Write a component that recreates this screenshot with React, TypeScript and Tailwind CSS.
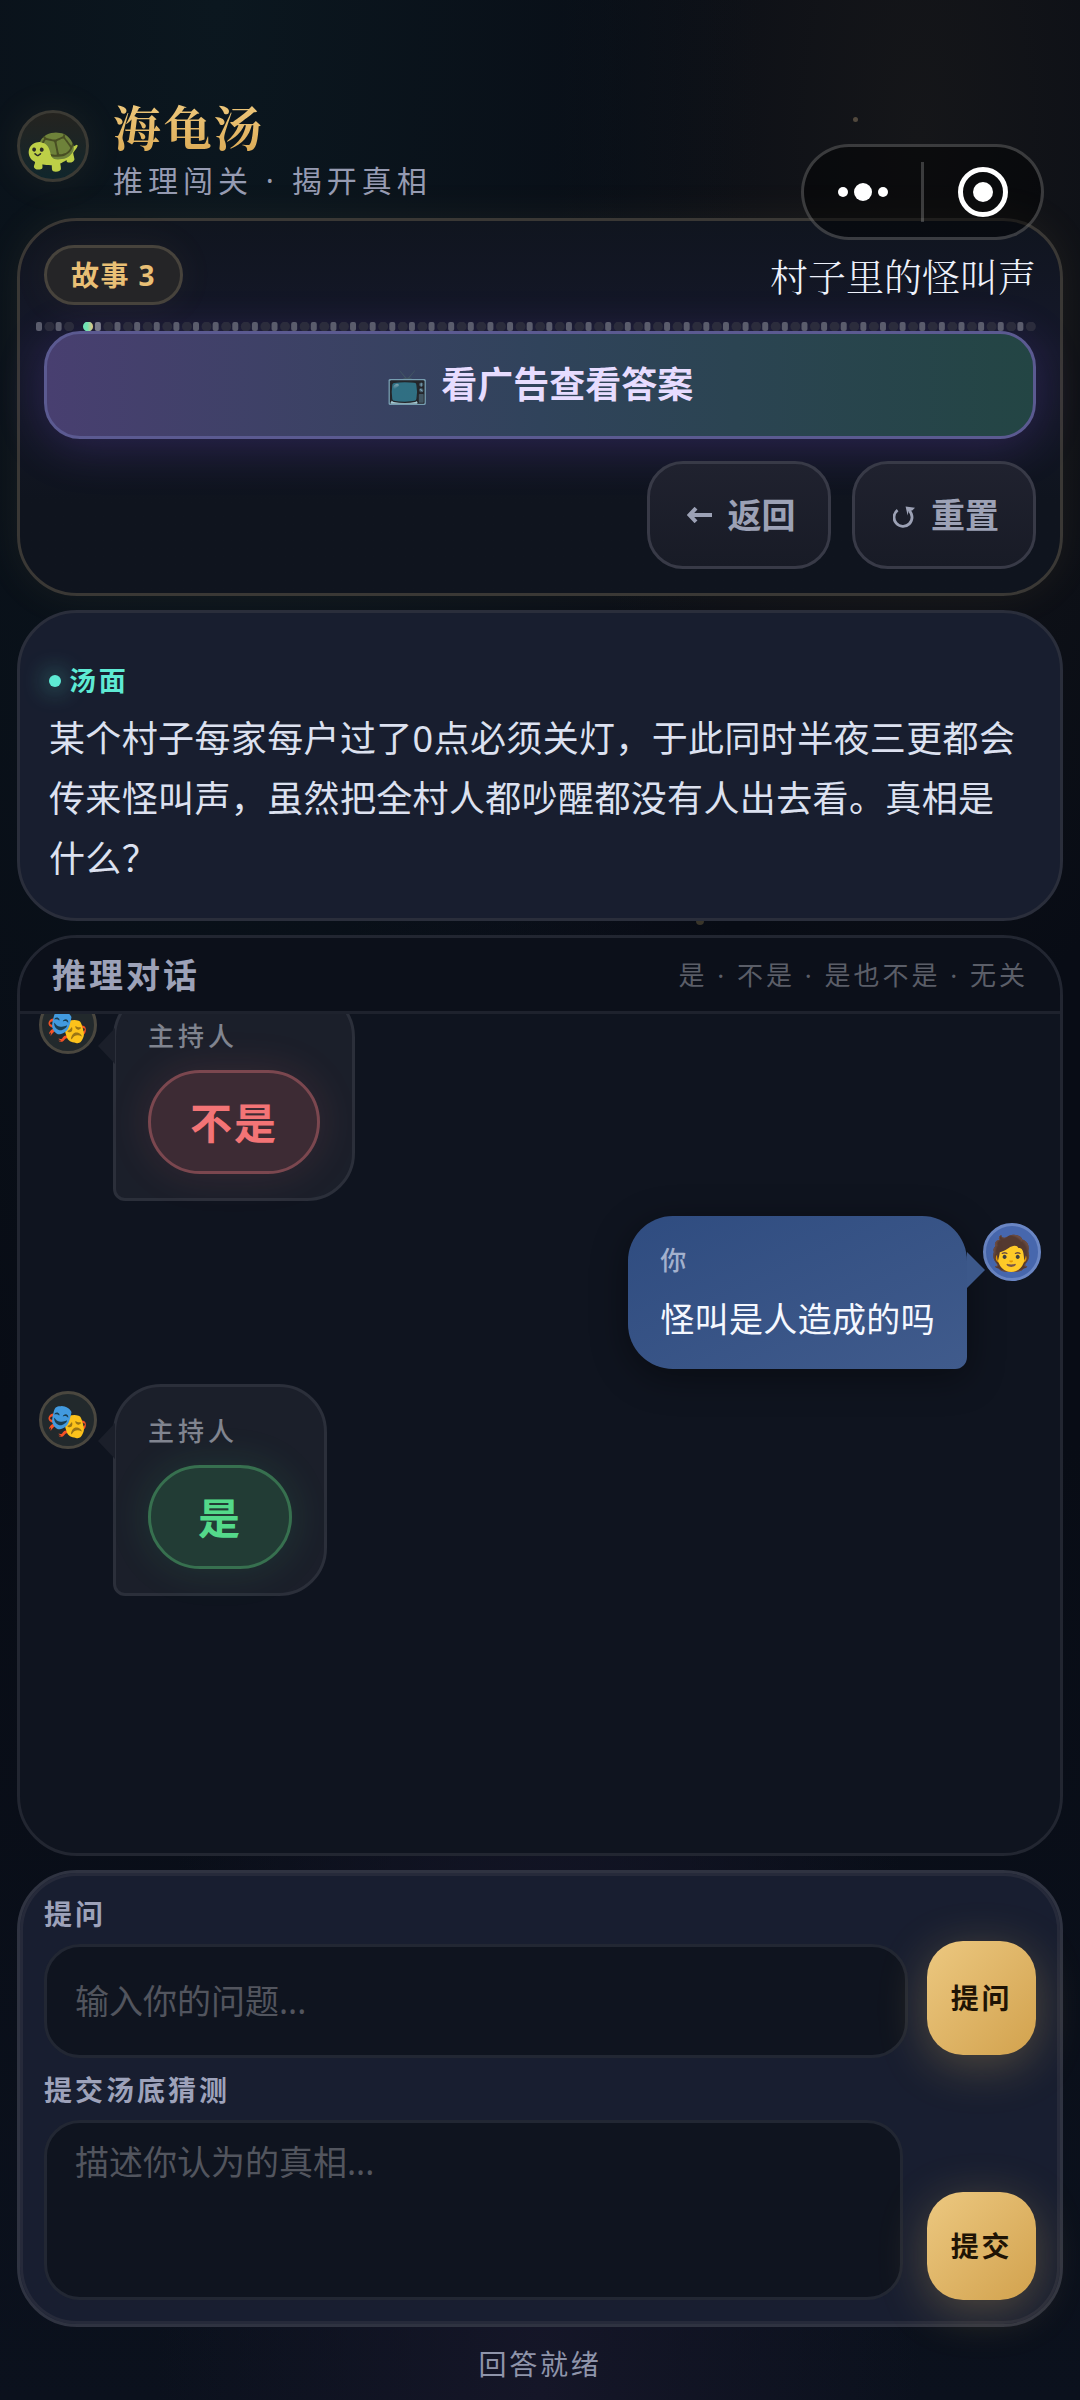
import type { ReactNode } from "react";
import clsx from "clsx";

type Message = {
  id: number;
  from: "host" | "me";
  text: string;
  verdict?: "yes" | "no";
};

const messages: Message[] = [
  { id: 1, from: "host", text: "不是", verdict: "no" },
  { id: 2, from: "me", text: "怪叫是人造成的吗" },
  { id: 3, from: "host", text: "是", verdict: "yes" },
];

const TRACK_STEPS = 51;
const CURRENT_STEP = 2;

function Capsule() {
  return (
    <div className="absolute top-36 right-9 z-10 flex h-24 w-[243px] items-center rounded-full border-3 border-white/20 bg-black/45">
      <button type="button" aria-label="更多" className="flex flex-1 justify-center">
        <svg width="52" height="20" viewBox="0 0 52 20" fill="#fff">
          <circle cx="6" cy="10" r="5" />
          <circle cx="26" cy="10" r="9" />
          <circle cx="46" cy="10" r="5" />
        </svg>
      </button>
      <span className="h-15 w-[3px] bg-white/20" />
      <button type="button" aria-label="关闭" className="flex flex-1 justify-center">
        <svg width="50" height="50" viewBox="0 0 50 50">
          <circle cx="25" cy="25" r="22.5" fill="none" stroke="#fff" strokeWidth="5" />
          <circle cx="25" cy="25" r="10" fill="#fff" />
        </svg>
      </button>
    </div>
  );
}

function ProgressTrack() {
  const step = 1001 / TRACK_STEPS;
  return (
    <svg viewBox="0 0 1001 9" className="-ml-[9px] block h-[9px] w-[calc(100%+9px)]" preserveAspectRatio="none">
      {Array.from({ length: TRACK_STEPS }, (_, i) => (
        <g key={i}>
          <circle cx={i * step + 14.5} cy="4.5" r="5" fill="#2b2c3c" />
          {i !== CURRENT_STEP && (
            <rect x={i * step + 1} y="0" width="6" height="9" rx="2" fill={i === 3 ? "#7b7d8c" : "#5a5c6c"} />
          )}
        </g>
      ))}
      <circle cx={53} cy="4.5" r="5" fill="url(#step)" />
      <defs>
        <linearGradient id="step">
          <stop offset="0.4" stopColor="#6fe3b4" />
          <stop offset="1" stopColor="#e8c584" />
        </linearGradient>
      </defs>
    </svg>
  );
}

function BackIcon() {
  return (
    <svg width="25" height="16" viewBox="0 0 25 16" fill="none" stroke="currentColor" strokeWidth="4">
      <path d="M9 1.2 2.5 8 9 14.8M2.5 8H25" />
    </svg>
  );
}

function ResetIcon() {
  return (
    <svg width="22" height="22" viewBox="0 0 22 22" className="mt-1">
      <path d="M4.6 4.2a9 9 0 1 0 11.6 0.6" fill="none" stroke="currentColor" strokeWidth="2.8" />
      <path d="M12.6 0.6 22 1.8 19.2 4.6 15.4 5.2 14.6 9.4z" fill="currentColor" />
    </svg>
  );
}

function GhostButton({ icon, children }: { icon: ReactNode; children: ReactNode }) {
  return (
    <button
      type="button"
      className="flex h-27 w-46 items-center justify-center gap-4 rounded-[36px] border-3 border-[#383a47] bg-gradient-to-b from-[#20222f] to-[#181b26] pl-1 text-[34px] font-bold text-[#9ca1b5]"
    >
      {icon}
      {children}
    </button>
  );
}

function Avatar({ me }: { me: boolean }) {
  return (
    <div
      className={clsx(
        "mt-[7px] flex size-[58px] shrink-0 items-center justify-center rounded-full border-3 text-[34px] leading-none",
        me ? "border-[#6a86c4] bg-[#4767ad]" : "border-[#4a473f] bg-[#22292c]"
      )}
    >
      {me ? "🧑" : "🎭"}
    </div>
  );
}

function MessageRow({ message }: { message: Message }) {
  const me = message.from === "me";
  return (
    <li className={clsx("flex items-start gap-4", me && "flex-row-reverse")}>
      <Avatar me={me} />
      <div
        className={clsx(
          "relative px-8 py-6",
          me
            ? "rounded-[45px] rounded-br-[12px] bg-gradient-to-br from-[#2f4c80] to-[#405b8c] shadow-[0_8px_36px_rgba(0,0,0,0.4)]"
            : "rounded-[48px] rounded-bl-[12px] border-3 border-[#2b2f3a] bg-[#1b1f2a]"
        )}
      >
        <svg
          width="18"
          height="36"
          viewBox="0 0 18 36"
          className={clsx("absolute top-9", me ? "left-full" : "right-full mr-[1px]")}
        >
          {me ? <path d="M0 0 18 18 0 36z" fill="#3c588a" /> : <path d="M18 0 1 18 18 36z" fill="#1b1f2a" />}
        </svg>
        <p className={clsx("text-[26px] leading-10 font-medium tracking-[4px]", me ? "text-[#a3b1cd]" : "text-[#80848f]")}>
          {me ? "你" : "主持人"}
        </p>
        {message.verdict ? (
          <p
            className={clsx(
              "mt-[14px] flex h-26 min-w-36 items-center justify-center rounded-full border-3 px-[39px] text-[42px] font-bold tracking-wider",
              message.verdict === "yes"
                ? "border-[#37704f] bg-[#223c35] text-[#54d98a] shadow-[0_0_42px_rgba(74,222,128,0.13)]"
                : "border-[#7b474f] bg-[#3d2b34] text-[#f37476] shadow-[0_0_42px_rgba(248,113,113,0.13)]"
            )}
          >
            {message.text}
          </p>
        ) : (
          <p className="mt-[14px] text-[34px] leading-[51px] tracking-[0.01em] text-[#f5f8ff]">{message.text}</p>
        )}
      </div>
    </li>
  );
}

function GoldButton({ children, className }: { children: ReactNode; className?: string }) {
  return (
    <button
      type="submit"
      className={clsx(
        "w-[109px] shrink-0 rounded-[36px] bg-gradient-to-br from-[#ecc880] to-[#d2a24d] text-[28px] font-bold tracking-widest text-[#1f1405] shadow-[0_10px_48px_rgba(232,190,100,0.28)]",
        className
      )}
    >
      {children}
    </button>
  );
}

const fieldClass =
  "min-w-0 flex-1 rounded-[36px] border-3 border-[#222733] bg-[#0f141f] px-7 text-[34px] text-[#dde1ee] placeholder:text-[#52555e]";
const labelClass = "block text-[28px] leading-10 font-bold tracking-[3px] text-[#9da2ba]";

export default function App() {
  return (
    <div className="relative flex min-h-screen flex-col bg-[#080c15] bg-[radial-gradient(ellipse_at_20%_0%,#0b171f_0%,transparent_45%),radial-gradient(ellipse_at_85%_6%,#151619_0%,transparent_28%),radial-gradient(ellipse_at_50%_100%,#151628_0%,transparent_50%),linear-gradient(to_bottom,#080c15_60%,#0b111d)] px-[17px] font-['Noto_Sans','Noto_Sans_CJK_SC','Noto_Color_Emoji',sans-serif] text-[#dde1ee]">
      <Capsule />
      <span className="absolute top-[117px] left-[79%] size-[5px] rounded-full bg-[#51483d]" />

      <header className="mb-[17px] flex items-start gap-6 pt-[98px]">
        <div className="mt-3 flex size-18 items-center justify-center rounded-full border-3 border-[#3b3a34] bg-gradient-to-b from-[#24231f] to-[#10262c] text-[45px] leading-none shadow-[0_0_40px_rgba(232,190,100,0.08)]">
          🐢
        </div>
        <div>
          <h1 className="bg-gradient-to-b from-[#f0cb80] to-[#dcab55] bg-clip-text font-['Noto_Serif_CJK_SC','Noto_Sans_CJK_SC',serif] text-[48px] leading-14 font-bold tracking-wider text-transparent">
            海龟汤
          </h1>
          <p className="mt-[7px] text-[30px] leading-10 tracking-[5px] text-[#969bb2]">推理闯关 · 揭开真相</p>
        </div>
      </header>

      <main className="flex flex-1 flex-col gap-[14px]">
        <section className="rounded-[60px] border-3 border-[#3a3835] bg-gradient-to-b from-[#10151f] via-[#15182a] via-35% to-[#0f141e] to-75% p-6 shadow-[0_0_40px_rgba(200,170,90,0.08)]">
          <div className="flex items-center justify-between">
            <span className="flex h-15 items-center rounded-full border-3 border-[#47433c] bg-[#252527] px-6 text-[28px] font-bold tracking-wider text-[#e9bf75] shadow-[0_0_40px_rgba(232,190,100,0.06)]">
              故事 3
            </span>
            <h2 className="font-['Noto_Serif_CJK_SC','Noto_Sans_CJK_SC',serif] text-[38px] leading-15 font-light text-[#eef1fb]">
              村子里的怪叫声
            </h2>
          </div>
          <div className="pt-[17px]">
            <ProgressTrack />
          </div>
          <button
            type="button"
            className="flex h-27 w-full items-center justify-center gap-3 rounded-[36px] border-3 border-[#5b5a91] bg-gradient-to-r from-[#483f70] via-[#30435b] via-50% to-[#234544] text-[36px] font-bold text-[#e7dcff] shadow-[0_8px_48px_rgba(139,92,246,0.22)]"
          >
            <span className="text-[34px] opacity-85">📺</span>
            看广告查看答案
          </button>
          <div className="mt-[22px] flex justify-end gap-[21px]">
            <GhostButton icon={<BackIcon />}>返回</GhostButton>
            <GhostButton icon={<ResetIcon />}>重置</GhostButton>
          </div>
        </section>

        <section className="relative rounded-[60px] border-3 border-[#2a2e3b] bg-[#181e2f] pt-12 pr-8 pb-[29px] pl-[29px]">
          <h3 className="flex h-10 items-center gap-2 text-[27px] font-bold tracking-widest text-[#5eead4]">
            <span className="size-3 rounded-full bg-[#5eead4] shadow-[0_0_24px_#5eead4]" />
            汤面
          </h3>
          <p className="mt-2 text-[36px] leading-15 tracking-[0.01em] text-[#dce1f0]">
            某个村子每家每户过了0点必须关灯，于此同时半夜三更都会传来怪叫声，虽然把全村人都吵醒都没有人出去看。真相是什么？
          </p>
          <span className="absolute top-full left-[65%] mt-[3px] h-1 w-2 rounded-b-full bg-[#39352a]" />
        </section>

        <section className="flex flex-1 flex-col overflow-hidden rounded-[60px] border-3 border-[#222631] bg-[#0f141f]">
          <div className="relative z-10 flex h-19 items-center justify-between border-b-3 border-[#1e222d] bg-[#0c101a] px-8">
            <h3 className="text-[34px] leading-10 font-bold tracking-[3px] text-[#9da2b8]">推理对话</h3>
            <span className="text-[26px] leading-10 tracking-[3px] text-[#5b5e68]">是 · 不是 · 是也不是 · 无关</span>
          </div>
          <div className="flex-1 overflow-hidden px-[19px]">
            <ul className="-mt-[25px] flex flex-col gap-[15px]">
              {messages.map((m) => (
                <MessageRow key={m.id} message={m} />
              ))}
            </ul>
          </div>
        </section>

        <section className="rounded-[60px] border-3 border-[#2f3341] bg-[#181e30] px-6 pt-[21px] pb-6 shadow-[inset_0_0_0_3px_#262a3a]">
          <form onSubmit={(e) => e.preventDefault()}>
            <label htmlFor="question" className={labelClass}>
              提问
            </label>
            <div className="mt-[7px] flex h-[117px] gap-[19px]">
              <input id="question" placeholder="输入你的问题..." className={clsx(fieldClass, "h-[114px] self-end")} />
              <GoldButton className="h-[114px] self-start">提问</GoldButton>
            </div>
          </form>
          <form className="mt-3" onSubmit={(e) => e.preventDefault()}>
            <label htmlFor="guess" className={labelClass}>
              提交汤底猜测
            </label>
            <div className="mt-[10px] flex items-end gap-6">
              <textarea id="guess" placeholder="描述你认为的真相..." className={clsx(fieldClass, "h-45 resize-none py-[14px] leading-[51px]")} />
              <GoldButton className="h-27">提交</GoldButton>
            </div>
          </form>
        </section>
      </main>

      <footer className="pt-[17px] pb-4 text-center text-[28px] leading-10 tracking-widest text-[#8f94aa]">回答就绪</footer>
    </div>
  );
}
